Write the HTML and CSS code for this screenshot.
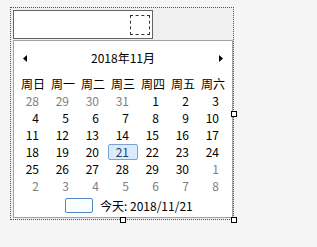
FILE: index.html
```html
<html>
<head>
  <title>日期选择</title>
  <meta charset="utf-8">
  <link rel="stylesheet" href="styles.css">
</head>
<body>

<div class="frame">
  <div class="textbox">
    <span class="drop"></span>
  </div>
  <div class="calendar">
    <div class="cal-head">
      <svg class="arrow" width="5" height="7" viewBox="0 0 5 7"><polygon points="4,0 0,3.5 4,7" fill="#000"/></svg>
      <span class="title">2018年11月</span>
      <svg class="arrow" width="5" height="7" viewBox="0 0 5 7"><polygon points="1,0 5,3.5 1,7" fill="#000"/></svg>
    </div>
    <div class="week">
      <span>周日</span><span>周一</span><span>周二</span><span>周三</span><span>周四</span><span>周五</span><span>周六</span>
    </div>
    <div class="days">
      <span class="other">28</span><span class="other">29</span><span class="other">30</span><span class="other">31</span><span>1</span><span>2</span><span>3</span>
      <span>4</span><span>5</span><span>6</span><span>7</span><span>8</span><span>9</span><span>10</span>
      <span>11</span><span>12</span><span>13</span><span>14</span><span>15</span><span>16</span><span>17</span>
      <span>18</span><span>19</span><span>20</span><span class="sel">21</span><span>22</span><span>23</span><span>24</span>
      <span>25</span><span>26</span><span>27</span><span>28</span><span>29</span><span>30</span><span class="other">1</span>
      <span class="other">2</span><span class="other">3</span><span class="other">4</span><span class="other">5</span><span class="other">6</span><span class="other">7</span><span class="other">8</span>
    </div>
    <div class="today">
      <span class="today-box"></span>
      <span>今天: 2018/11/21</span>
    </div>
  </div>
  <span class="handle h-right"></span>
  <span class="handle h-bottom"></span>
  <span class="handle h-corner"></span>
</div>

</body>
</html>
```

FILE: styles.css
```css
* { box-sizing: border-box; }
html, body { margin: 0; padding: 0; }
body { background: #f5f5f5; font-family: "Noto Sans CJK SC", "Noto Sans", sans-serif; font-size: 12px; color: #000; }

.frame { position: relative; margin: 7px 0 0 10px; width: 224px; height: 213px; padding: 2px 1px 0 1px; border: 1px dotted #555; background: #f0f0f0; }

.textbox { display: flex; align-items: center; justify-content: flex-end; width: 140px; height: 29px; margin-left: 1px; padding-right: 2px; padding-top: 1px; border: 1px solid #646464; background: #fff; }
.drop { width: 20px; height: 20px; border: 1px dashed #333; }

.calendar { width: 220px; height: 178px; margin: 1px 0 0 1px; padding: 0 4px; border: 1px solid #a0a0a0; background: #fff; }
.cal-head { display: flex; align-items: center; justify-content: space-between; height: 34px; padding: 0 5px; }
.arrow { display: block; }
.title { line-height: 16px; }

.week, .days { display: grid; grid-template-columns: repeat(7, 30px); }
.week { grid-auto-rows: 17px; line-height: 17px; text-align: center; }
.days { grid-auto-rows: 17px; line-height: 17px; text-align: right; }
.days span { padding-right: 9px; }
.days .other { color: #808080; }
.days .sel { height: 16px; margin-top: 1px; line-height: 14px; padding-right: 8px; border: 1px solid #7aa3d3; border-radius: 2px; background: #dcebfb; color: #1c3f6e; }

.today { display: flex; align-items: center; gap: 7px; height: 22px; padding-left: 47px; }
.today-box { width: 28px; height: 15px; border: 1px solid #4f88c6; border-radius: 2px; background: #fbfdff; }

.handle { position: absolute; width: 6px; height: 6px; border: 1px solid #000; background: #fff; }
.h-right { right: -4px; top: 103px; }
.h-bottom { left: 109px; bottom: -4px; }
.h-corner { right: -4px; bottom: -4px; }
```
